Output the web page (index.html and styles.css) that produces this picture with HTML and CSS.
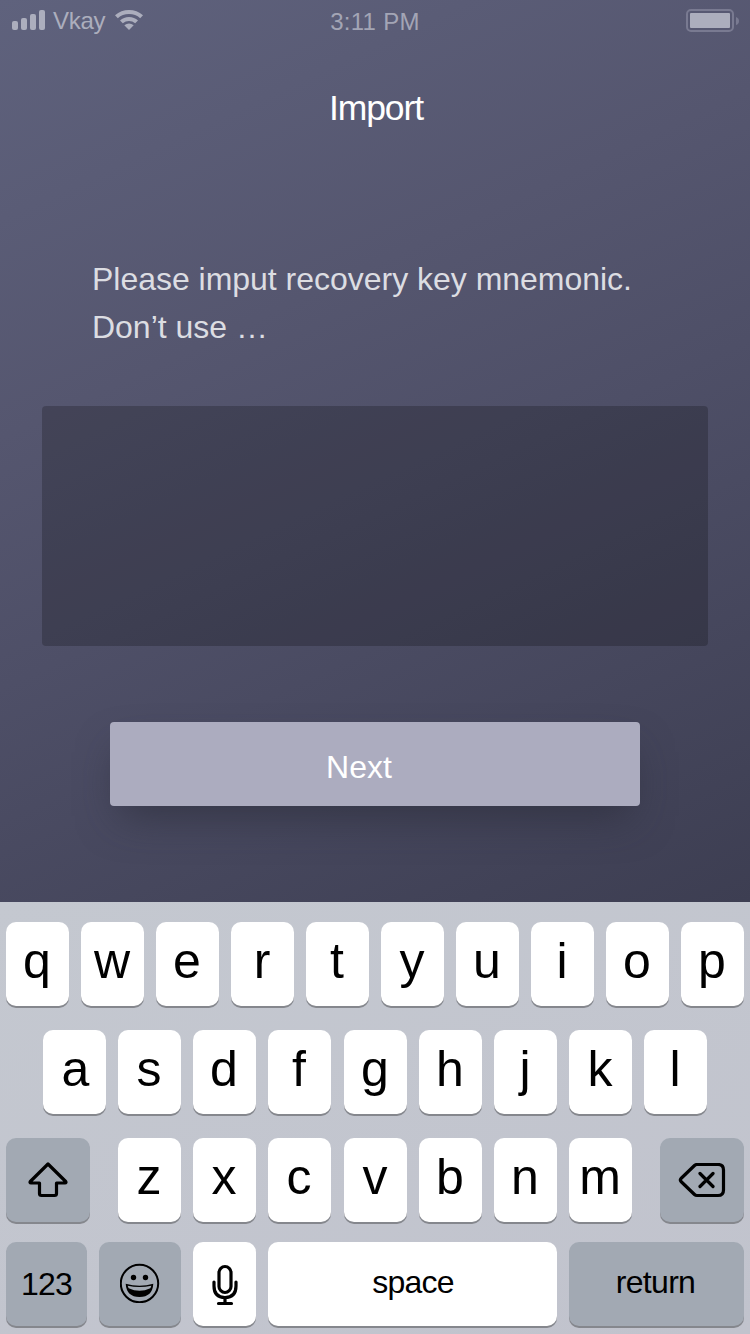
FILE: index.html
```html
<!DOCTYPE html>
<html lang="en">
<head>
<meta charset="utf-8">
<title>Import</title>
<link rel="stylesheet" href="styles.css">
</head>
<body>
<main class="screen">
  <header class="status">
    <div class="carrier">
      <svg class="signal" width="34" height="20" viewBox="0 0 34 20"><rect x="0" y="11" width="6" height="9" rx="2"/><rect x="9" y="8" width="6" height="12" rx="2"/><rect x="18" y="4" width="6" height="16" rx="2"/><rect x="27" y="0" width="6" height="20" rx="2"/></svg>
      <span class="carrier-name">Vkay</span>
      <svg class="wifi" width="28" height="20" viewBox="0 0 28 20"><path d="M0 5.3Q6 0 14 0T28 5.3L25.2 8.2Q20.5 4 14 4T2.8 8.2Z"/><path d="M5 10.4Q8.700 6.900 14 6.900T23 10.400L20.200 13.200Q17.500 10.900 14 10.900T7.800 13.200Z"/><path d="M9.300 15.200Q14 11.800 18.700 15.200L14 20Z"/></svg>
    </div>
    <span class="clock">3:11 PM</span>
    <svg class="battery" width="54" height="24" viewBox="0 0 54 24"><rect class="shell" x="1" y="1" width="46" height="21" rx="4"/><rect x="4" y="4" width="40" height="15" rx="1"/><path class="cap" d="M50 8Q53 9 53 12T50 16Z"/></svg>
  </header>
  <h1 class="title">Import</h1>
  <p class="hint">Please imput recovery key mnemonic.<br>Don’t use …</p>
  <div class="phrase"></div>
  <button class="next">Next</button>
</main>
<section class="keyboard">
  <div class="row"><span class="key">q</span><span class="key">w</span><span class="key">e</span><span class="key">r</span><span class="key">t</span><span class="key">y</span><span class="key">u</span><span class="key">i</span><span class="key">o</span><span class="key">p</span></div>
  <div class="row middle"><span class="key first">a</span><span class="key">s</span><span class="key">d</span><span class="key">f</span><span class="key nudge">g</span><span class="key">h</span><span class="key">j</span><span class="key">k</span><span class="key">l</span></div>
  <div class="row">
    <span class="key dark shift"><svg width="40" height="36" viewBox="0 0 40 36"><path d="M20 2L2.300 19.500Q1.500 21 3 21H11.500V31.500Q11.500 33.500 13.500 33.500H26.500Q28.500 33.500 28.500 31.500V21H37Q38.500 21 37.700 19.500Z"/></svg></span>
    <span class="key">z</span><span class="key">x</span><span class="key">c</span><span class="key nudge">v</span><span class="key">b</span><span class="key">n</span><span class="key">m</span>
    <span class="key dark delete"><svg width="48" height="36" viewBox="0 0 48 36"><path d="M19 1.500H40Q45.500 1.500 45.500 7V27Q45.500 32.500 40 32.500H19Q17.500 32.500 16.500 31.500L3 18.500Q1.700 17 3 15.500L16.500 2.500Q17.500 1.500 19 1.500ZM22 10.500L35 23.500M35 10.500L22 23.500"/></svg></span>
  </div>
  <div class="row bottom">
    <span class="key dark word numbers">123</span>
    <span class="key dark emoji"><svg width="40" height="40" viewBox="0 0 40 40"><circle class="face" cx="19.500" cy="20.500" r="18.700"/><circle class="solid" cx="13.500" cy="14.500" r="2.700"/><circle class="solid" cx="25.500" cy="14.500" r="2.700"/><path class="solid" fill-rule="evenodd" d="M5.700 20.800Q19.500 24.500 33.300 20.800Q32.500 34 19.500 34T5.700 20.800ZM7.700 22.700Q8 24 8.700 25.200Q19.500 30.500 30.300 25.200Q31 24 31.300 22.700Q19.500 25.500 7.700 22.700Z"/></svg></span>
    <span class="key mic"><svg width="26" height="42" viewBox="0 0 26 42"><rect x="7" y="2.500" width="12" height="26" rx="6"/><path d="M2 18V22Q2 33.500 13 33.500T24 22V18M13 33.500V39M6.500 39.500H19.500"/></svg></span>
    <span class="key word space">space</span>
    <span class="key dark word return">return</span>
  </div>
</section>
</body>
</html>
```
FILE: styles.css
```css
* { box-sizing: border-box; }
body {
  margin: 0;
  width: 750px;
  height: 1334px;
  overflow: hidden;
  font-family: "Liberation Sans", Arial, sans-serif;
}
.screen {
  display: flex;
  flex-direction: column;
  align-items: center;
  height: 902px;
  background: linear-gradient(155deg, #5f627d 0%, #55566f 35%, #4e4f67 55%, #3d3e52 100%);
}
.status {
  display: grid;
  grid-template-columns: 1fr auto 1fr;
  width: 750px;
  height: 43px;
  padding: 0 10px 0 12px;
  color: #acaebd;
  fill: #acaebd;
  font-size: 24px;
  line-height: 43px;
}
.carrier { display: flex; align-items: flex-start; }
.signal { margin-top: 10px; }
.carrier-name { margin-left: 7px; width: 62px; letter-spacing: -0.3px; line-height: 42px; }
.wifi { margin-top: 10px; }
.clock { letter-spacing: 0.3px; margin-right: 2px; color: #a3a5b5; }
.battery { justify-self: end; margin-top: 9px; }
.shell { fill: none; stroke: #797a91; stroke-width: 2; }
.cap { fill: #797a91; }
.title {
  margin: 44px 0 0 2px;
  color: #fff;
  font-size: 35.5px;
  font-weight: 400;
  line-height: 42px;
  letter-spacing: -1.1px;
}
.hint {
  align-self: flex-start;
  margin: 126px 0 0 92px;
  color: #dcdde2;
  font-size: 32px;
  line-height: 48px;
  letter-spacing: -0.02px;
}
.phrase {
  width: 666px;
  height: 240px;
  margin-top: 55px;
  border-radius: 4px;
  background: rgba(0, 0, 0, 0.21);
}
.next {
  width: 530px;
  height: 84px;
  margin-top: 76px;
  padding: 6px 32px 0 0;
  border: 0;
  border-radius: 4px;
  background: #acacbf;
  box-shadow: 0 20px 40px -10px rgba(40, 41, 54, 0.6);
  color: #fff;
  font: 32px "Liberation Sans", Arial, sans-serif;
}
.keyboard {
  display: flex;
  flex-direction: column;
  gap: 24px;
  height: 432px;
  padding: 20px 6px 0;
  background: linear-gradient(160deg, #c4c8d0, #c1c3cd);
}
.row { display: flex; gap: 12px; height: 84px; }
.middle { padding-left: 37px; }
.bottom { margin-top: -4px; }
.key {
  display: flex;
  flex: none;
  justify-content: center;
  width: 63px;
  height: 84px;
  padding-right: 1px;
  border-radius: 10px;
  background: #fff;
  box-shadow: 0 2px 0 #85878d;
  color: #000;
  font-size: 50px;
  line-height: 79px;
}
.first { padding: 0 0 0 2px; }
.nudge { margin-left: 1px; }
.dark { background: #a2a9b3; }
.key svg { fill: none; stroke: #000; stroke-width: 3.2; stroke-linecap: round; stroke-linejoin: round; }
.key svg .solid { fill: #000; stroke: none; }
.key svg .face { stroke-width: 2; }
.shift { width: 84px; margin-right: 16px; padding: 24px 0 0; }
.delete { width: 84px; margin-left: 16px; padding: 25px 0 0; }
.emoji { width: 82px; padding: 21px 0 0; }
.mic { padding: 22px 0 0; }
.word { padding: 0; font-size: 32px; line-height: 80px; }
.numbers { width: 81px; line-height: 84px; letter-spacing: -0.8px; }
.space { width: 289px; padding-left: 1px; letter-spacing: -0.8px; }
.return { width: 175px; padding-right: 2px; letter-spacing: -0.7px; }
```
